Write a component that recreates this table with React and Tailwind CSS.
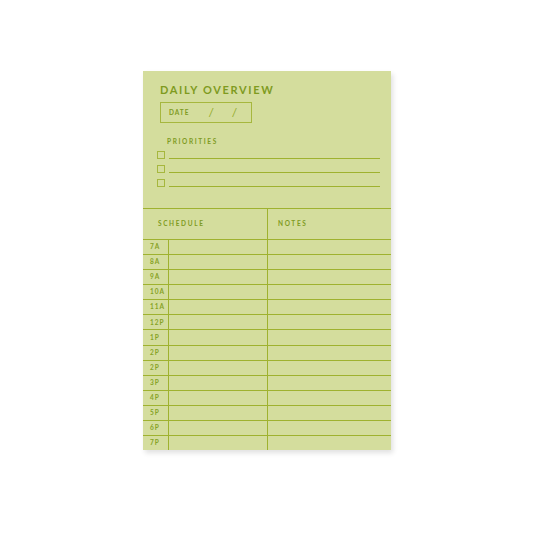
import React from "react";

const times = ["7A", "8A", "9A", "10A", "11A", "12P", "1P", "2P", "2P", "3P", "4P", "5P", "6P", "7P"];

export default function App() {
  return (
    <div className="w-[533px] h-[533px] bg-white pl-[143px] pt-[71px]" style={{ fontFamily: "Lato, 'Open Sans', sans-serif" }}>
      <div className="w-[248px] h-[379px] bg-[#d4dd9d] flex flex-col shadow-[2px_3px_5px_rgba(0,0,0,0.12)] text-[#7f9b1f]">
        <div className="h-[137px] flex flex-col pl-[17px] pt-[13px]">
          <div className="text-[11px] font-bold tracking-[0.15em] leading-[12px]">DAILY OVERVIEW</div>
          <div className="mt-[6px] w-[92px] h-[21px] border border-[#a6b73e] flex items-center pl-[8px]">
            <span className="text-[6.5px] font-bold tracking-[0.15em]">DATE</span>
            <span className="ml-[19px] text-[12px] font-normal text-[#93ab2c] leading-none">/</span>
            <span className="ml-[18px] text-[12px] font-normal text-[#93ab2c] leading-none">/</span>
          </div>
          <div className="mt-[15px] ml-[7px] text-[6.5px] font-bold tracking-[0.25em] leading-[8px]">PRIORITIES</div>
          <div className="mt-[5px] -ml-[3px] flex flex-col gap-[6px]">
            {[0, 1, 2].map((i) => (
              <div key={i} className="flex items-end h-[8px]">
                <div className="w-[8px] h-[8px] border border-[#a6b73e]" />
                <div className="ml-[4px] w-[211px] h-[1px] bg-[#9fb22f]" />
              </div>
            ))}
          </div>
        </div>
        <div className="flex-1 flex flex-col border-t border-[#9fb22f]">
          <div className="h-[30px] flex">
            <div className="w-[125px] border-r border-[#9fb22f] flex items-center pl-[15px] text-[6.5px] font-bold tracking-[0.25em]">SCHEDULE</div>
            <div className="flex-1 flex items-center pl-[10px] text-[6.5px] font-bold tracking-[0.25em]">NOTES</div>
          </div>
          <div className="flex-1 flex flex-col">
            {times.map((t, i) => (
              <div key={i} className="flex-1 flex border-t border-[#9fb22f]">
                <div className="w-[26px] border-r border-[#9fb22f] flex items-center pl-[7px] text-[6.5px] font-bold tracking-[0.15em] text-[#86a226]">{t}</div>
                <div className="w-[99px] border-r border-[#9fb22f]" />
                <div className="flex-1" />
              </div>
            ))}
          </div>
        </div>
      </div>
    </div>
  );
}
